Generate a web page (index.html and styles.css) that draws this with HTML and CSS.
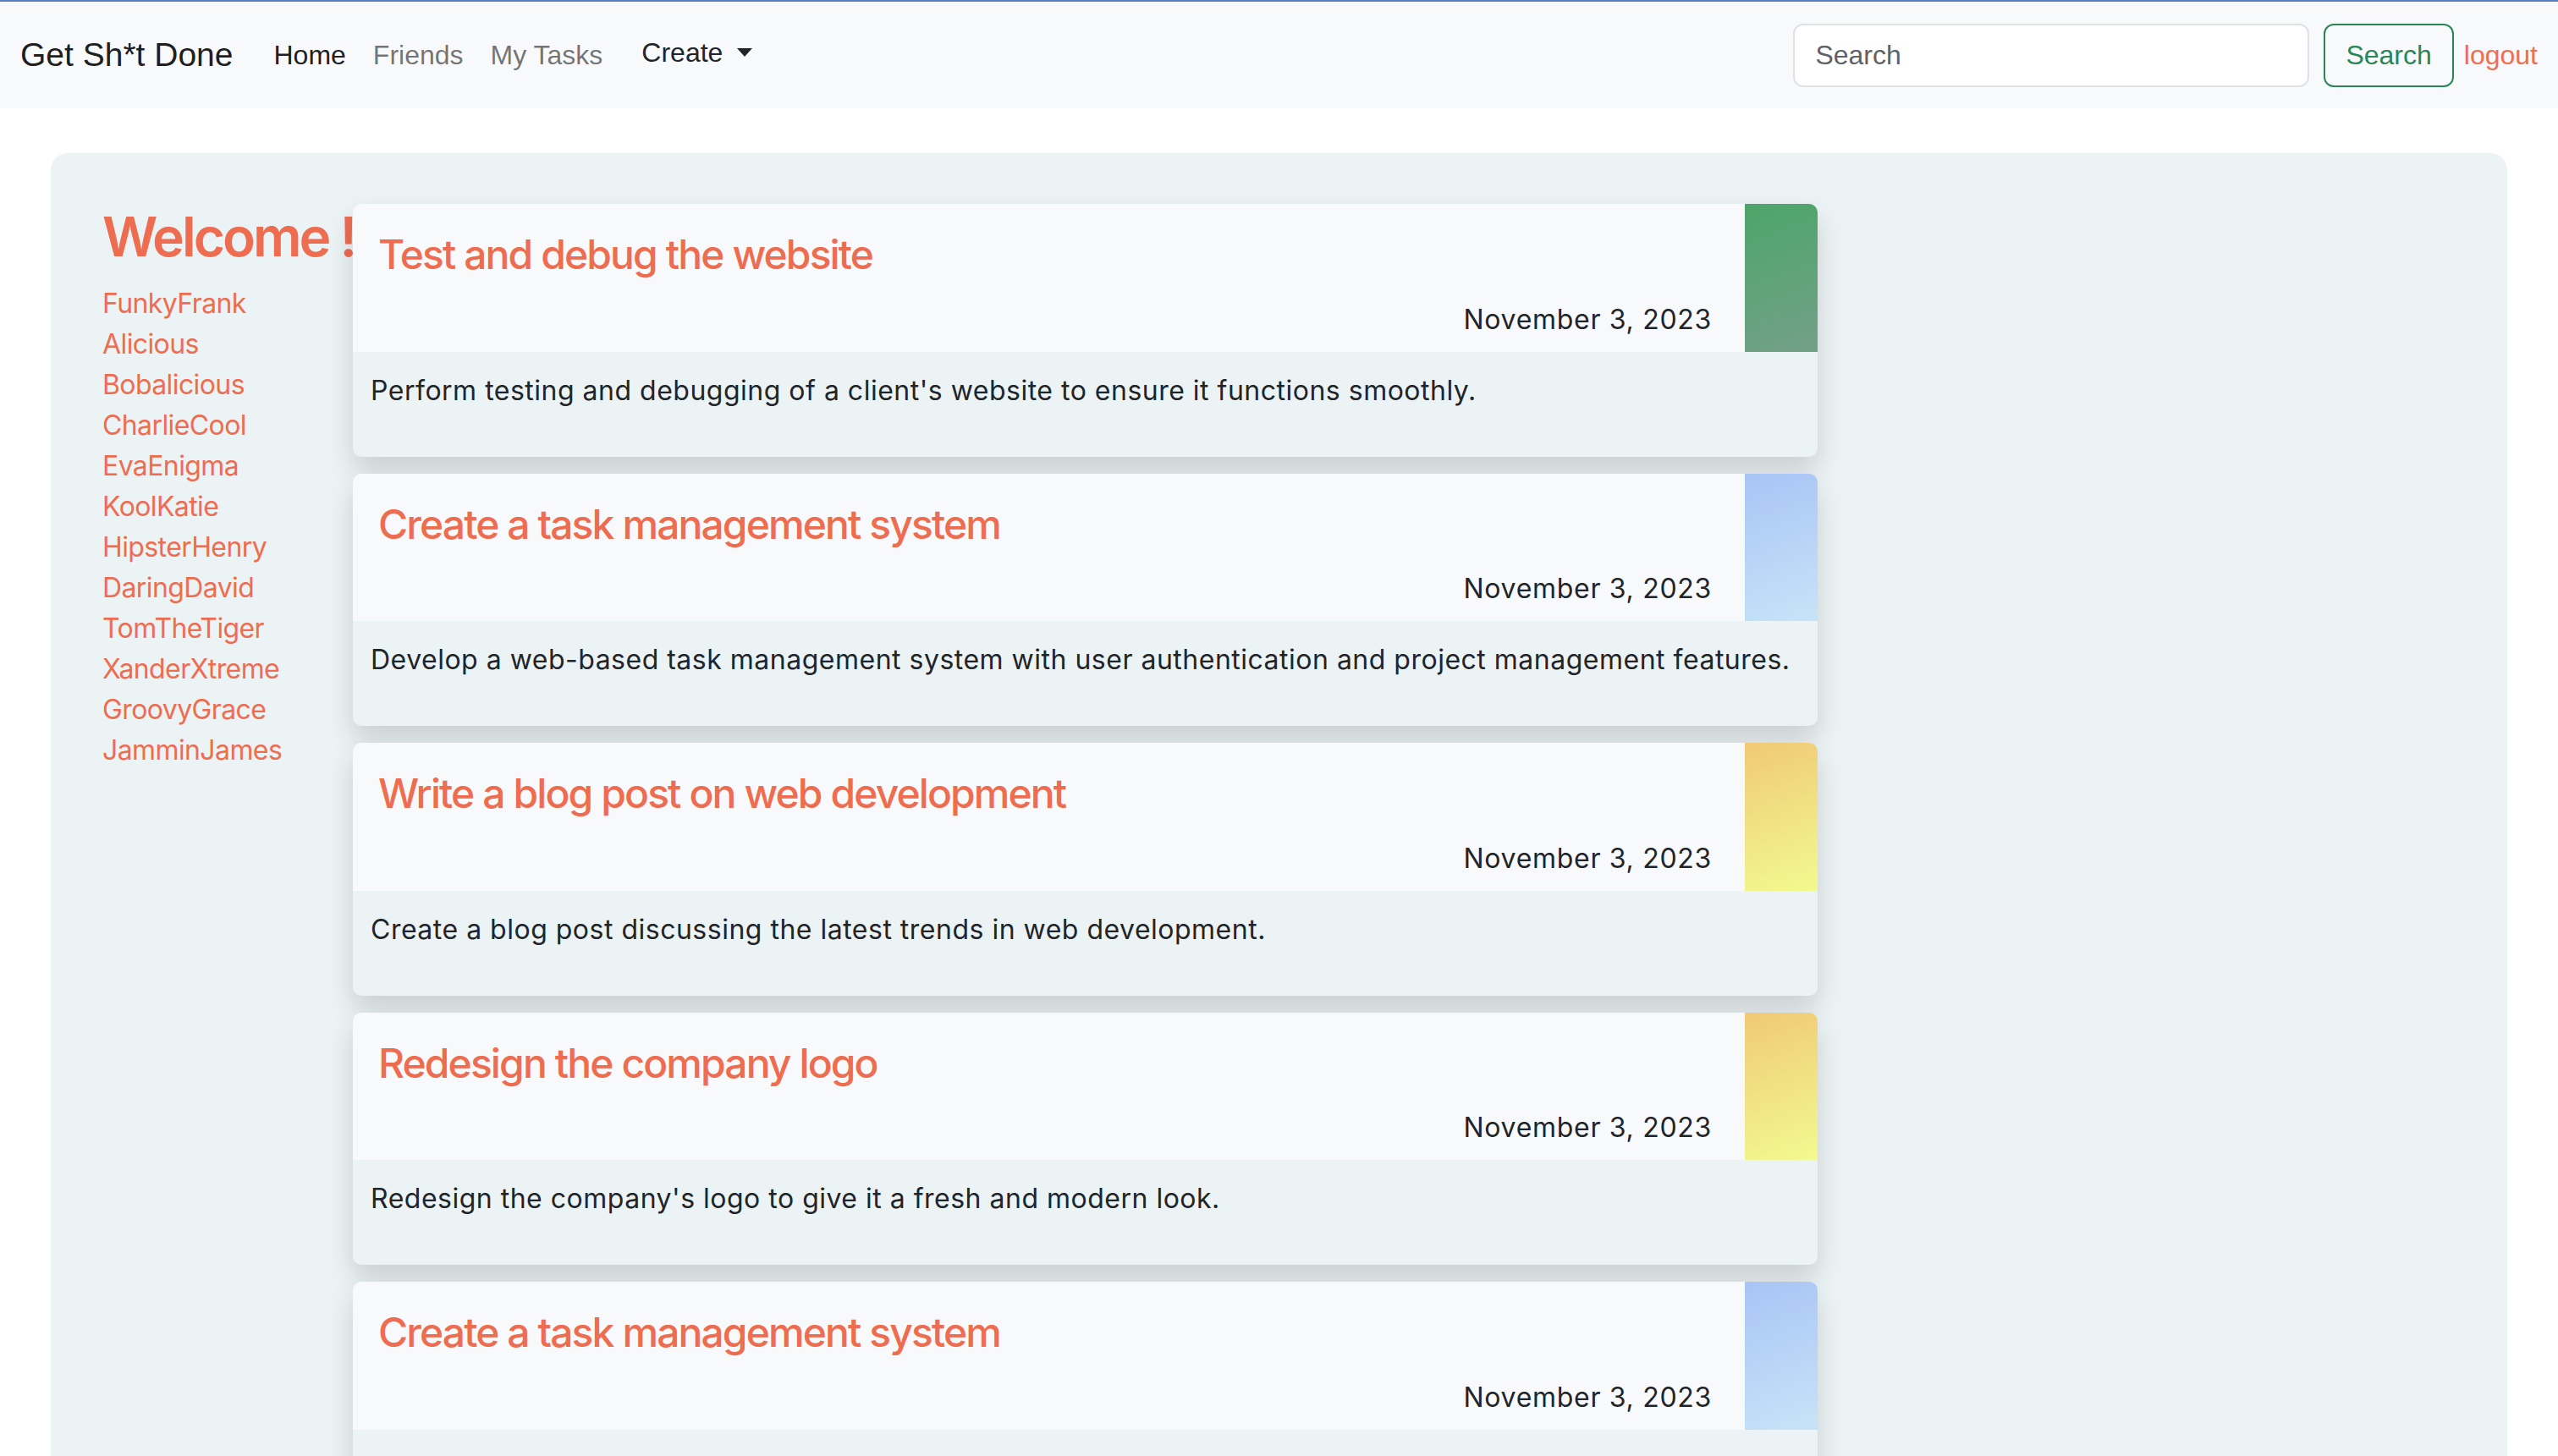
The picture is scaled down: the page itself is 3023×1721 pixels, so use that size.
FILE: index.html
```html
<!DOCTYPE html>
<html lang="en">
<head>
<meta charset="utf-8">
<title>Get Sh*t Done</title>
<link rel="stylesheet" href="styles.css">
</head>
<body>
<nav class="navbar">
  <a class="brand" href="#">Get Sh*t Done</a>
  <ul class="nav">
    <li><a class="nav-link active" href="#">Home</a></li>
    <li><a class="nav-link" href="#">Friends</a></li>
    <li><a class="nav-link" href="#">My Tasks</a></li>
    <li><a class="nav-link dropdown" href="#">Create<span class="caret"></span></a></li>
  </ul>
  <form class="search-form">
    <input class="search-input" type="search" placeholder="Search">
    <button class="search-btn" type="button">Search</button>
  </form>
  <a class="logout" href="#">logout</a>
</nav>

<main class="panel">
  <aside class="friends">
    <h2 class="welcome">Welcome !</h2>
    <ul class="friend-list">
      <li><a href="#">FunkyFrank</a></li>
      <li><a href="#">Alicious</a></li>
      <li><a href="#">Bobalicious</a></li>
      <li><a href="#">CharlieCool</a></li>
      <li><a href="#">EvaEnigma</a></li>
      <li><a href="#">KoolKatie</a></li>
      <li><a href="#">HipsterHenry</a></li>
      <li><a href="#">DaringDavid</a></li>
      <li><a href="#">TomTheTiger</a></li>
      <li><a href="#">XanderXtreme</a></li>
      <li><a href="#">GroovyGrace</a></li>
      <li><a href="#">JamminJames</a></li>
    </ul>
  </aside>

  <section class="tasks">
    <article class="card">
      <header class="card-head">
        <div class="head-main">
          <h4 class="card-title">Test and debug the website</h4>
          <p class="card-date">November 3, 2023</p>
        </div>
        <div class="strip strip-green"></div>
      </header>
      <div class="card-body"><p>Perform testing and debugging of a client's website to ensure it functions smoothly.</p></div>
    </article>

    <article class="card">
      <header class="card-head">
        <div class="head-main">
          <h4 class="card-title">Create a task management system</h4>
          <p class="card-date">November 3, 2023</p>
        </div>
        <div class="strip strip-blue"></div>
      </header>
      <div class="card-body"><p>Develop a web-based task management system with user authentication and project management features.</p></div>
    </article>

    <article class="card">
      <header class="card-head">
        <div class="head-main">
          <h4 class="card-title">Write a blog post on web development</h4>
          <p class="card-date">November 3, 2023</p>
        </div>
        <div class="strip strip-yellow"></div>
      </header>
      <div class="card-body"><p>Create a blog post discussing the latest trends in web development.</p></div>
    </article>

    <article class="card">
      <header class="card-head">
        <div class="head-main">
          <h4 class="card-title">Redesign the company logo</h4>
          <p class="card-date">November 3, 2023</p>
        </div>
        <div class="strip strip-yellow"></div>
      </header>
      <div class="card-body"><p>Redesign the company's logo to give it a fresh and modern look.</p></div>
    </article>

    <article class="card">
      <header class="card-head">
        <div class="head-main">
          <h4 class="card-title">Create a task management system</h4>
          <p class="card-date">November 3, 2023</p>
        </div>
        <div class="strip strip-blue"></div>
      </header>
      <div class="card-body"><p>Develop a web-based task management system with user authentication and project management features.</p></div>
    </article>
  </section>
</main>
</body>
</html>
```

FILE: styles.css
```css
html {
  overflow: hidden;
}

body {
  margin: 0;
  font-family: Inter, "Noto Sans", sans-serif;
  color: #212529;
  background: #ffffff;
}

a {
  text-decoration: none;
}

ul {
  list-style: none;
  margin: 0;
  padding: 0;
}

/* ---------- navbar ---------- */
.navbar {
  box-sizing: border-box;
  height: 128px;
  border-top: 2px solid #5580c0;
  background: #f8f9fa;
  display: flex;
  align-items: center;
  padding: 0 24px 0 24px;
  font-family: "Liberation Sans", Arial, sans-serif;
}

.brand {
  font-size: 39px;
  color: rgba(0, 0, 0, 0.9);
  margin-right: 32px;
}

.nav {
  display: flex;
  align-items: center;
}

.nav-link {
  display: block;
  padding: 0 16px;
  font-size: 32px;
  color: rgba(0, 0, 0, 0.55);
}

.nav-link.active {
  color: rgba(0, 0, 0, 0.9);
}

.nav-link.dropdown {
  color: #212529;
  margin-left: 14px;
  display: flex;
  align-items: center;
  position: relative;
  top: -3px;
}

.caret {
  display: inline-block;
  margin-left: 17px;
  border-top: 10px solid #212529;
  border-left: 9px solid transparent;
  border-right: 9px solid transparent;
}

.search-form {
  margin-left: auto;
  display: flex;
  gap: 17px;
}

.search-input {
  box-sizing: border-box;
  width: 610px;
  height: 75px;
  border: 2px solid #dee2e6;
  border-radius: 12px;
  padding: 0 24px;
  font-family: "Liberation Sans", Arial, sans-serif;
  font-size: 32px;
  color: #212529;
  background: #ffffff;
  outline: none;
}

.search-input::placeholder {
  color: #5e6266;
}

.search-btn {
  box-sizing: border-box;
  height: 75px;
  padding: 0 24px;
  border: 2px solid #2a8656;
  border-radius: 12px;
  background: transparent;
  color: #2a8656;
  font-family: "Liberation Sans", Arial, sans-serif;
  font-size: 32px;
}

.logout {
  margin-left: 12px;
  font-size: 32px;
  color: #ef6d51;
}

/* ---------- main panel ---------- */
.panel {
  margin: 53px 60px 0;
  padding: 60px 61px;
  background: #ecf3f5;
  border-radius: 20px;
  display: flex;
  align-items: flex-start;
}

.friends {
  width: 296px;
  flex: none;
}

.welcome {
  margin: 1px 0 16px;
  font-size: 64px;
  font-weight: 600;
  line-height: 1.2;
  letter-spacing: -3px;
  color: #ee6d51;
  white-space: nowrap;
}

.friend-list li {
  font-size: 32px;
  line-height: 48px;
  letter-spacing: -0.6px;
}

.friend-list a {
  color: #ee6d51;
}

/* ---------- task cards ---------- */
.tasks {
  width: 1731px;
  flex: none;
  display: flex;
  flex-direction: column;
  gap: 20px;
}

.card {
  border-radius: 10px;
  overflow: hidden;
  box-shadow: 0 16px 32px rgba(0, 0, 0, 0.15);
  background: #ecf3f5;
}

.card-head {
  display: flex;
}

.head-main {
  flex: 1;
  background: #f8f9fa;
  padding: 31px 39px 14px 30px;
}

.card-title {
  margin: 0 0 24px;
  font-size: 48px;
  font-weight: 500;
  line-height: 1.2;
  letter-spacing: -1.9px;
  color: #ee6d51;
}

.card-date {
  margin: 0;
  text-align: right;
  font-size: 32px;
  line-height: 48px;
  letter-spacing: 0.7px;
  color: #212529;
}

.strip {
  width: 86px;
  flex: none;
}

.strip-green {
  background: linear-gradient(160deg, #4ca56a, #74a088);
}

.strip-blue {
  background: linear-gradient(160deg, #a8c4f5, #c6e4f8);
}

.strip-yellow {
  background: linear-gradient(160deg, #f0c977, #f2fa8f);
}

.card-body {
  padding: 22px 8px 22px 21px;
}

.card-body p {
  margin: 0 0 32px;
  font-size: 32px;
  line-height: 48px;
  letter-spacing: 0.5px;
  white-space: nowrap;
  color: #212529;
}
```
